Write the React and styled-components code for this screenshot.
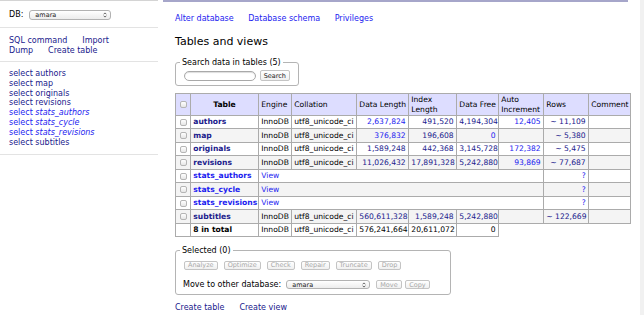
import React from 'react';
import styled, { createGlobalStyle } from 'styled-components';

const NAVY = '#20208c';
const BLUE = '#1c1cf0';

const GlobalStyle = createGlobalStyle`
  html, body { margin: 0; padding: 0; background: #fff; }
  body {
    font-family: "DejaVu Sans", Verdana, sans-serif;
    font-size: 8px;
    color: #000;
  }
`;

const Page = styled.div`
  display: flex;
  width: 644px;
  height: 315px;
  overflow: hidden;
`;

const Sidebar = styled.div`
  width: 158px;
  flex-shrink: 0;
  border-top: 1px solid #d4d4d4;
`;

const DbRow = styled.div`
  display: flex;
  align-items: center;
  gap: 6px;
  height: 10px;
  padding: 8.7px 0 7px 9px;
  border-bottom: 1px solid #e3e3e3;
`;

const MenuBlock = styled.div`
  padding: ${p => p.$pad};
  border-bottom: 1px solid #e3e3e3;
  line-height: ${p => p.$lh || 10}px;
`;

const LinkLine = styled.div`
  display: flex;
  gap: ${p => p.$gap || 15}px;
`;

const Lk = styled.a`
  color: ${p => (p.$v ? NAVY : BLUE)};
  text-decoration: none;
  font-style: ${p => (p.$i ? 'italic' : 'normal')};
  font-weight: ${p => (p.$b ? 'bold' : 'normal')};
  cursor: pointer;
`;

const Dropdown = styled.span`
  display: flex;
  align-items: center;
  justify-content: space-between;
  box-sizing: border-box;
  width: ${p => p.$w}px;
  height: ${p => p.$h}px;
  padding: 0 3px 0 5px;
  border: 1px solid #b2b2b2;
  border-radius: 3px;
  background: linear-gradient(#fff, #ececec);
  font-size: 6.5px;
  color: #222;
`;

const Main = styled.div`
  width: 477px;
  flex-shrink: 0;
  margin-left: 5px;
`;

const TopLine = styled.div`
  width: 465px;
  height: 2px;
  background: #a6a6ca;
`;

const Content = styled.div`
  padding-left: 12px;
`;

const Nav = styled(LinkLine)`
  margin-top: ${p => p.$mt}px;
  line-height: 10px;
`;

const Heading = styled.h3`
  margin: 11.9px 0 0;
  font-size: 11px;
  font-weight: normal;
  line-height: 13px;
`;

const Box = styled.fieldset`
  box-sizing: border-box;
  width: ${p => p.$w}px;
  margin: ${p => p.$mt}px 0 0;
  padding: ${p => p.$pad};
  border: 1px solid #b4b4b4;
  border-radius: 3px;
  min-inline-size: 0;
`;

const Legend = styled.legend`
  margin-left: -4px;
  padding: 0 2px;
  font-size: 8px;
  line-height: 9px;
`;

const Row = styled.div`
  display: flex;
  align-items: center;
  gap: ${p => p.$gap}px;
  margin-top: ${p => p.$mt || 0}px;
  margin-left: ${p => p.$ml || 0}px;
`;

const SearchInput = styled.span`
  display: block;
  box-sizing: border-box;
  width: 72px;
  height: 10px;
  border: 1px solid #a9a9a9;
  border-radius: 5px;
  background: #fff;
  box-shadow: inset 0 1px 1px #ddd;
`;

const Btn = styled.span`
  display: inline-flex;
  align-items: center;
  justify-content: center;
  box-sizing: border-box;
  height: ${p => p.$h || 9}px;
  padding: 0 3px;
  margin-left: ${p => p.$ml || 0}px;
  border: 1px solid #c4c4c4;
  border-radius: 2px;
  background: linear-gradient(#fff, #f0f0f0);
  font-size: 6.5px;
  color: ${p => (p.$off ? '#a8a8a8' : '#222')};
`;

const Grid = styled.table`
  margin-top: 7px;
  border-spacing: 0;
  border-top: 1px solid #ababab;
  border-left: 1px solid #ababab;
  table-layout: fixed;
  width: 456px;
  font-size: 7.6px;
  line-height: 9.7px;
`;

const Cell = styled.td`
  box-sizing: border-box;
  padding: 1.4px 2.3px;
  border-right: 1px solid #ababab;
  border-bottom: 1px solid #ababab;
  white-space: nowrap;
  overflow: hidden;
  text-align: ${p => (p.$num ? 'right' : p.$center ? 'center' : 'left')};
  font-weight: ${p => (p.$b ? 'bold' : 'normal')};
  background: ${p => (p.$odd ? '#f4f4f4' : '#fff')};
  vertical-align: middle;
`;

const Head = styled.td`
  box-sizing: border-box;
  width: ${p => p.$w}px;
  padding: 0.6px 2.3px;
  border-right: 1px solid #ababab;
  border-bottom: 1px solid #ababab;
  background: #ddf;
  white-space: nowrap;
  text-align: ${p => (p.$center ? 'center' : 'left')};
  font-weight: ${p => (p.$b ? 'bold' : 'normal')};
  vertical-align: middle;
`;

const Check = styled.span`
  display: inline-block;
  box-sizing: border-box;
  width: 7px;
  height: 7px;
  border: 1px solid #b5b5b5;
  border-radius: 2px;
  background: linear-gradient(#fff, #e6e6e6);
  vertical-align: middle;
`;

const Strip = styled.div`
  width: 4px;
  margin-left: auto;
  flex-shrink: 0;
  background: #f1f1f1;
`;

const Arrows = () => (
  <svg width="4" height="6" viewBox="0 0 4 6">
    <path d="M0.6 2.3L2 0.9L3.4 2.3M0.6 3.7L2 5.1L3.4 3.7" fill="none" stroke="#444" strokeWidth="0.8" />
  </svg>
);

const menu = [
  { name: 'authors', v: true },
  { name: 'map', v: true },
  { name: 'originals', v: true },
  { name: 'revisions', v: true },
  { name: 'stats_authors', view: true },
  { name: 'stats_cycle', view: true },
  { name: 'stats_revisions', view: true },
  { name: 'subtitles', v: true },
];

// value, visited
const tables = [
  { name: 'authors', dl: ['2,637,824', 0], il: ['491,520', 1], df: ['4,194,304', 1], ai: '12,405', rows: '11,109' },
  { name: 'map', dl: ['376,832', 0], il: ['196,608', 1], df: ['0', 0], ai: '', rows: '5,380' },
  { name: 'originals', dl: ['1,589,248', 1], il: ['442,368', 1], df: ['3,145,728', 1], ai: '172,382', rows: '5,475' },
  { name: 'revisions', dl: ['11,026,432', 1], il: ['17,891,328', 1], df: ['5,242,880', 1], ai: '93,869', rows: '77,687' },
  { name: 'stats_authors', view: true },
  { name: 'stats_cycle', view: true },
  { name: 'stats_revisions', view: true },
  { name: 'subtitles', dl: ['560,611,328', 1], il: ['1,589,248', 1], df: ['5,242,880', 1], ai: '', rows: '122,669' },
];

const headers = [
  { w: 15 },
  { w: 68, label: 'Table', b: true, center: true },
  { w: 33, label: 'Engine' },
  { w: 65, label: 'Collation' },
  { w: 52, label: 'Data Length' },
  { w: 48, label: ['Index', 'Length'] },
  { w: 42, label: 'Data Free' },
  { w: 45, label: ['Auto', 'Increment'] },
  { w: 45, label: 'Rows' },
  { w: 42, label: 'Comment' },
];

const TableRow = ({ t, odd }) => (
  <tr>
    <Cell $odd={odd} $center><Check /></Cell>
    <Cell $odd={odd}><Lk $b $v={!t.view}>{t.name}</Lk></Cell>
    {t.view ? (
      <Cell $odd={odd} colSpan={6}><Lk>View</Lk></Cell>
    ) : (
      <>
        <Cell $odd={odd}>InnoDB</Cell>
        <Cell $odd={odd}>utf8_unicode_ci</Cell>
        <Cell $odd={odd} $num><Lk $v={t.dl[1]}>{t.dl[0]}</Lk></Cell>
        <Cell $odd={odd} $num><Lk $v={t.il[1]}>{t.il[0]}</Lk></Cell>
        <Cell $odd={odd} $num><Lk $v={t.df[1]}>{t.df[0]}</Lk></Cell>
        <Cell $odd={odd} $num><Lk>{t.ai}</Lk></Cell>
      </>
    )}
    <Cell $odd={odd} $num>{t.view ? <Lk>?</Lk> : <Lk $v>{'\u223C ' + t.rows}</Lk>}</Cell>
    <Cell $odd={odd} />
  </tr>
);

export default function App() {
  return (
    <Page>
      <GlobalStyle />
      <Sidebar>
        <DbRow>
          <span>DB:</span>
          <Dropdown $w={82} $h={10}>amara<Arrows /></Dropdown>
        </DbRow>
        <MenuBlock $pad="8px 0 5px 9px">
          <LinkLine><Lk $v>SQL command</Lk><Lk $v>Import</Lk></LinkLine>
          <LinkLine><Lk $v>Dump</Lk><Lk $v>Create table</Lk></LinkLine>
        </MenuBlock>
        <MenuBlock $pad="7px 0 6px 9px" $lh={9.9}>
          {menu.map(m => (
            <div key={m.name}>
              <Lk $v={m.v}>select</Lk> <Lk $v={m.v} $i={m.view}>{m.name}</Lk>
            </div>
          ))}
        </MenuBlock>
      </Sidebar>

      <Main>
        <TopLine />
        <Content>
          <Nav $gap={14.5} $mt={11.6}>
            <Lk>Alter database</Lk>
            <Lk>Database schema</Lk>
            <Lk>Privileges</Lk>
          </Nav>
          <Heading>Tables and views</Heading>

          <Box $w={124} $mt={9.6} $pad="3px 8px 4.3px">
            <Legend>Search data in tables (5)</Legend>
            <Row $gap={4}>
              <SearchInput />
              <Btn $h={11}>Search</Btn>
            </Row>
          </Box>

          <Grid>
            <thead>
              <tr>
                {headers.map((h, i) => (
                  <Head key={i} $w={h.w} $b={h.b} $center={h.center || i === 0}>
                    {i === 0 ? <Check /> : Array.isArray(h.label) ? <>{h.label[0]}<br />{h.label[1]}</> : h.label}
                  </Head>
                ))}
              </tr>
            </thead>
            <tbody>
              {tables.map((t, i) => <TableRow key={t.name} t={t} odd={i % 2 === 1} />)}
              <tr>
                <Cell />
                <Cell $b>8 in total</Cell>
                <Cell>InnoDB</Cell>
                <Cell>utf8_unicode_ci</Cell>
                <Cell $num>576,241,664</Cell>
                <Cell $num>20,611,072</Cell>
                <Cell $num>0</Cell>
              </tr>
            </tbody>
          </Grid>

          <Box $w={276} $mt={8.5} $pad="6px 8px 5px">
            <Legend>Selected (0)</Legend>
            <Row $gap={6}>
              {['Analyze', 'Optimize', 'Check', 'Repair', 'Truncate', 'Drop'].map(b => (
                <Btn key={b} $off>{b}</Btn>
              ))}
            </Row>
            <Row $gap={5} $mt={10.3} $ml={-1}>
              <span>Move to other database:</span>
              <Dropdown $w={84} $h={9}>amara<Arrows /></Dropdown>
              <Btn $off $ml={1}>Move</Btn>
              <Btn $off $ml={-1.5}>Copy</Btn>
            </Row>
          </Box>

          <Nav $gap={15} $mt={8}>
            <Lk $v>Create table</Lk>
            <Lk $v>Create view</Lk>
          </Nav>
        </Content>
      </Main>
      <Strip />
    </Page>
  );
}
